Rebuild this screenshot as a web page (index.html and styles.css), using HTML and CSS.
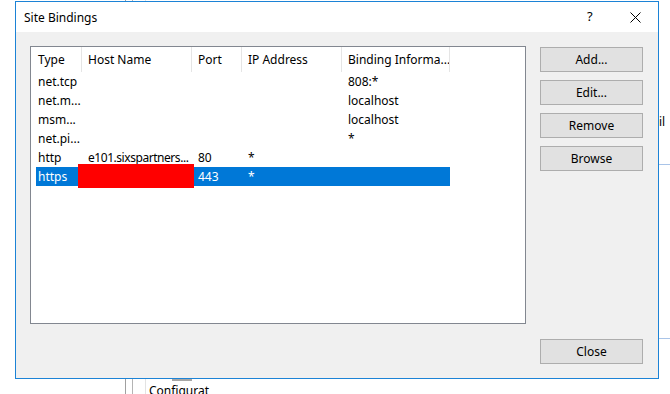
FILE: index.html
```html
<!DOCTYPE html>
<html lang="en">
<head>
  <meta charset="UTF-8" />
  <title>Site Bindings</title>
  <link rel="stylesheet" href="styles.css">
</head>
<body>
  <div class="desktop">
    <!-- bits of the IIS manager window behind the dialog -->
    <div class="bg-line line-a"></div>
    <div class="bg-line line-b"></div>
    <div class="bg-line line-c"></div>
    <div class="bg-tab"></div>
    <div class="bg-text config">Configurat</div>
    <div class="bg-text mail">il</div>
    <div class="bg-rule rule-1"></div>
    <div class="bg-rule rule-2"></div>

    <div class="dialog">
      <div class="titlebar">
        <span class="title">Site Bindings</span>
        <span class="help">?</span>
        <svg class="close-x" width="11" height="11" viewBox="0 0 11 11">
          <path d="M0.5 0.5 L10.5 10.5 M10.5 0.5 L0.5 10.5" stroke="#000" stroke-width="1" fill="none"/>
        </svg>
      </div>

      <div class="client">
        <div class="listbox">
          <div class="list-head">
            <div class="hcell first">Type</div>
            <div class="hcell">Host Name</div>
            <div class="hcell">Port</div>
            <div class="hcell">IP Address</div>
            <div class="hcell">Binding Informa...</div>
          </div>
          <div class="row"><span>net.tcp</span><span></span><span></span><span></span><span>808:*</span></div>
          <div class="row"><span>net.m...</span><span></span><span></span><span></span><span>localhost</span></div>
          <div class="row"><span>msm...</span><span></span><span></span><span></span><span>localhost</span></div>
          <div class="row"><span>net.pi...</span><span></span><span></span><span></span><span>*</span></div>
          <div class="row"><span>http</span><span class="host">e101.sixspartners...</span><span>80</span><span>*</span><span></span></div>
          <div class="row selected"><span>https</span><span></span><span>443</span><span>*</span><span></span></div>
          <div class="redact"></div>
        </div>

        <div class="buttons">
          <button>Add...</button>
          <button>Edit...</button>
          <button>Remove</button>
          <button>Browse</button>
          <button class="close-btn">Close</button>
        </div>
      </div>
    </div>
  </div>
</body>
</html>
```

FILE: styles.css
```css
body {
  margin: 0;
  background: #fff;
  font-family: "Noto Sans", "Open Sans", sans-serif;
  font-size: 12px;
  color: #000;
}

.desktop {
  position: relative;
  width: 670px;
  height: 394px;
  overflow: hidden;
}

.bg-line {
  position: absolute;
  top: 0;
  width: 1px;
  height: 394px;
  background: #a0a0a0;
}
.line-a { left: 125px; }
.line-b { left: 132px; background: #b4b4b4; }
.line-c { left: 145px; background: #e3e3e3; }

.bg-tab {
  position: absolute;
  left: 172px;
  top: 379px;
  width: 20px;
  height: 2px;
  background: #a6a6a6;
}

.bg-text {
  position: absolute;
  white-space: nowrap;
}
.config { left: 149px; top: 382px; }
.mail { left: 659px; top: 113px; }

.bg-rule {
  position: absolute;
  left: 659px;
  width: 11px;
  height: 1px;
  background: #a9c4e8;
}
.rule-1 { top: 164px; }
.rule-2 { top: 338px; }

.dialog {
  position: absolute;
  left: 15px;
  top: 1px;
  width: 644px;
  height: 378px;
  box-sizing: border-box;
  border: 1px solid #1c83d6;
  display: flex;
  flex-direction: column;
  background: #f0f0f0;
}

.titlebar {
  position: relative;
  height: 30px;
  background: #fff;
  display: flex;
  align-items: center;
  padding-left: 8px;
}

.help {
  position: absolute;
  left: 571px;
  top: 5px;
  font-size: 13px;
}

.close-x {
  position: absolute;
  left: 614px;
  top: 10px;
}

.client {
  flex: 1;
  display: flex;
  gap: 14px;
  padding: 14px 15px 14px 14px;
}

.listbox {
  position: relative;
  width: 496px;
  height: 278px;
  box-sizing: border-box;
  border: 1px solid #828790;
  background: #fff;
}

.list-head {
  display: grid;
  grid-template-columns: 51px 110px 50px 100px 108px;
  height: 25px;
}

.hcell {
  border-right: 1px solid #e5e5e5;
  padding-left: 6px;
  line-height: 25px;
  white-space: nowrap;
  overflow: hidden;
}
.hcell.first { padding-left: 7px; }

.row {
  display: grid;
  grid-template-columns: 46px 110px 50px 100px 108px;
  margin-left: 5px;
  width: 414px;
  height: 19px;
  line-height: 19px;
  white-space: nowrap;
}
.row span {
  padding-left: 6px;
  overflow: hidden;
}
.row span:first-child { padding-left: 2px; }
.row span.host {
  letter-spacing: -0.45px;
  overflow: visible;
}

.row.selected {
  background: #0078d7;
  color: #fff;
}

.redact {
  position: absolute;
  left: 47px;
  top: 117px;
  width: 116px;
  height: 24px;
  background: #ff0000;
}

.buttons {
  display: flex;
  flex-direction: column;
  gap: 8px;
  width: 103px;
  padding-top: 1px;
}

button {
  height: 25px;
  box-sizing: border-box;
  border: 1px solid #adadad;
  background: #e1e1e1;
  font-family: inherit;
  font-size: 12px;
  color: #000;
  padding: 0;
}

.close-btn {
  margin-top: auto;
}
```
